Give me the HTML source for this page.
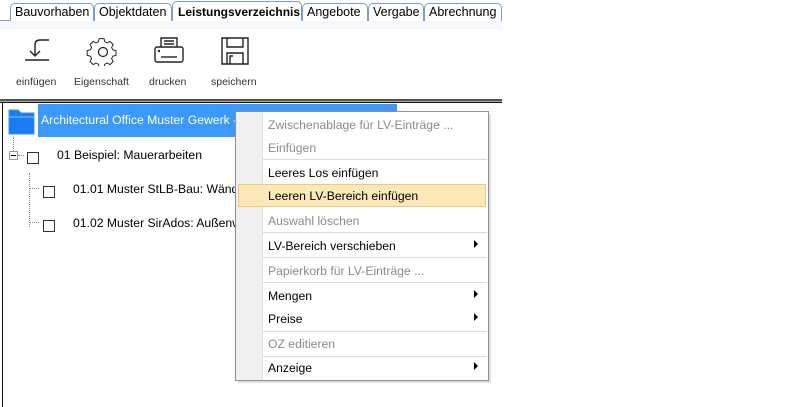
<!DOCTYPE html>
<html><head><style>
*{margin:0;padding:0;box-sizing:border-box}
body{width:796px;height:407px;background:#fff;position:relative;overflow:hidden;font-family:"Liberation Sans",sans-serif;font-size:12px;color:#000}
.a{position:absolute}
.tab{position:absolute;top:3px;height:18px;border:1px solid #7a9cc9;border-bottom:none;border-radius:5px 5px 0 0;font-family:"Liberation Sans",sans-serif;font-size:12.5px;line-height:16px;padding-left:4px;background:#fff;white-space:nowrap;overflow:hidden}
.lbl{position:absolute;top:76px;font-size:10.5px;color:#333}
.mi{position:absolute;left:268px;font-family:"Liberation Sans",sans-serif;font-size:12.2px;color:#000;white-space:nowrap}
.dis{color:#8a8a8a}
.sep{position:absolute;left:263px;width:224px;height:1px;background:#dcdcdc}
.arr{position:absolute;left:474px;width:0;height:0;border-left:4px solid #000;border-top:4px solid transparent;border-bottom:4px solid transparent}
.cb{position:absolute;width:12px;height:12px;border:1px solid #333;background:#fff}
.t{position:absolute;font-size:12.2px;white-space:nowrap}
</style></head><body>
<div class="a" style="left:0;top:20px;width:502px;height:1px;background:#7a9cc9"></div>
<div class="a" style="left:0;top:21px;width:502px;height:8px;background:#f5f7fc"></div>
<div class="tab" style="left:10px;width:84px">Bauvorhaben</div>
<div class="tab" style="left:94px;width:78px">Objektdaten</div>
<div class="tab" style="left:172px;width:130px;font-weight:bold;font-size:12px;top:1px;height:20px;line-height:20px;border-bottom:1px solid #fff;padding-left:5px">Leistungsverzeichnis</div>
<div class="tab" style="left:302px;width:66px">Angebote</div>
<div class="tab" style="left:368px;width:56px">Vergabe</div>
<div class="tab" style="left:424px;width:78px">Abrechnung</div>

<svg class="a" style="left:20px;top:36px" width="34" height="30" viewBox="0 0 34 30" fill="none" stroke="#222" stroke-width="1.4">
<path d="M29 4 H20 Q15 4 15 9 V20"/><path d="M10 15 L15 20 L20 15"/><path d="M5 24 H29"/></svg>
<svg class="a" style="left:86px;top:36px" width="34" height="30" viewBox="0 0 34 30" fill="none" stroke="#222" stroke-width="1.2">
<path d="M14 2h6l1 4 3 1.5 3.5-2 4 4-2 3.5 1.5 3 4 1v6l-4 1-1.5 3 2 3.5-4 4-3.5-2-3 1.5-1 4h-6l-1-4-3-1.5-3.5 2-4-4 2-3.5-1.5-3-4-1v-6l4-1 1.5-3-2-3.5 4-4 3.5 2 3-1.5z" transform="translate(2,1) scale(0.8)"/><circle cx="17" cy="16" r="4.5"/></svg>
<svg class="a" style="left:152px;top:36px" width="34" height="30" viewBox="0 0 34 30" fill="none" stroke="#222" stroke-width="1.4">
<path d="M9 11V2h16v9"/><path d="M12 5h10M12 8h10"/><rect x="3" y="11" width="28" height="15" rx="2"/><path d="M9 21h16"/><circle cx="7" cy="15" r=".5" fill="#222"/></svg>
<svg class="a" style="left:218px;top:36px" width="34" height="30" viewBox="0 0 34 30" fill="none" stroke="#222" stroke-width="1.4">
<path d="M4 2h26v26H4z"/><path d="M9 2v9h16V2"/><path d="M9 28V17h16v11"/><path d="M12 28v-8h3"/></svg>
<div class="lbl" style="left:16px">einfügen</div>
<div class="lbl" style="left:74px">Eigenschaft</div>
<div class="lbl" style="left:149px">drucken</div>
<div class="lbl" style="left:211px">speichern</div>

<div class="a" style="left:0;top:99px;width:502px;height:2px;background:#555"></div>
<div class="a" style="left:0;top:101px;width:502px;height:1px;background:#aaa"></div>
<div class="a" style="left:0;top:102px;width:502px;height:1px;background:#111"></div>
<div class="a" style="left:2px;top:102px;width:1px;height:305px;background:#111"></div>

<div class="a" style="left:38px;top:104px;width:359px;height:33px;background:#3b99fc"></div>
<svg class="a" style="left:8px;top:108px" width="27" height="27" viewBox="0 0 27 27"><path d="M1 2h9l3 3h13v21H1z" fill="#1a7cf5" stroke="#4a90d9"/><path d="M1 9h25" stroke="#8cc0fb"/></svg>
<div class="t" style="left:41px;top:113px;color:#fff">Architectural Office Muster Gewerk - </div>
<div class="a" style="left:13px;top:137px;height:16px;border-left:1px dotted #888"></div>
<div class="a" style="left:9px;top:151px;width:9px;height:9px;border:1px solid #999;background:#fff"></div>
<div class="a" style="left:11px;top:155px;width:5px;height:1px;background:#000"></div>
<div class="a" style="left:18px;top:155px;width:6px;border-top:1px dotted #888"></div>
<div class="cb" style="left:27px;top:152px"></div>
<div class="t" style="left:57px;top:148px">01 Beispiel: Mauerarbeiten</div>
<div class="a" style="left:29px;top:173px;height:54px;border-left:1px dotted #888"></div>
<div class="a" style="left:30px;top:188px;width:9px;border-top:1px dotted #888"></div>
<div class="a" style="left:30px;top:222px;width:9px;border-top:1px dotted #888"></div>
<div class="cb" style="left:43px;top:186px"></div>
<div class="cb" style="left:43px;top:220px"></div>
<div class="t" style="left:73px;top:182px">01.01 Muster StLB-Bau: Wänd</div>
<div class="t" style="left:73px;top:216px">01.02 Muster SirAdos: Außenw</div>

<div class="a" style="left:238px;top:114px;width:253px;height:269px;background:rgba(0,0,0,0.12)"></div>
<div class="a" style="left:235px;top:111px;width:254px;height:270px;background:#fff;border:1px solid #8e8c9c"></div>
<div class="a" style="left:236px;top:112px;width:26px;height:268px;background:#f0f0f0"></div>
<div class="a" style="left:262px;top:112px;width:1px;height:268px;background:#e2e2e2"></div>
<div class="a" style="left:238px;top:184px;width:248px;height:23px;background:#fde8b8;border:1px solid #f5c57a"></div>
<div class="sep" style="top:159px"></div>
<div class="sep" style="top:232px"></div>
<div class="sep" style="top:257px"></div>
<div class="sep" style="top:282px"></div>
<div class="sep" style="top:331px"></div>
<div class="sep" style="top:356px"></div>
<div class="mi dis" style="top:118px">Zwischenablage für LV-Einträge ...</div>
<div class="mi dis" style="top:141px">Einfügen</div>
<div class="mi" style="top:166px">Leeres Los einfügen</div>
<div class="mi" style="top:189px">Leeren LV-Bereich einfügen</div>
<div class="mi dis" style="top:214px">Auswahl löschen</div>
<div class="mi" style="top:239px">LV-Bereich verschieben</div>
<div class="mi dis" style="top:264px">Papierkorb für LV-Einträge ...</div>
<div class="mi" style="top:289px">Mengen</div>
<div class="mi" style="top:312px">Preise</div>
<div class="mi dis" style="top:337px">OZ editieren</div>
<div class="mi" style="top:361px">Anzeige</div>
<div class="arr" style="top:240px"></div>
<div class="arr" style="top:290px"></div>
<div class="arr" style="top:313px"></div>
<div class="arr" style="top:362px"></div>
</body></html>
